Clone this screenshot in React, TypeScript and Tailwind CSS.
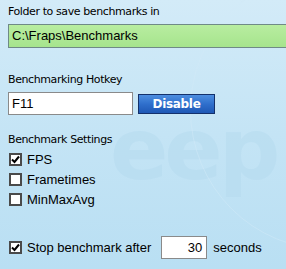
import React from 'react'

function Check({ checked }: { checked?: boolean }) {
  return (
    <span className="w-[13px] h-[13px] border-2 border-[#4a4a4a] bg-white flex items-center justify-center shrink-0">
      {checked && (
        <svg width="9" height="9" viewBox="0 0 9 9">
          <path d="M1 4.5 L3.5 7 L8 1.5" stroke="#000" strokeWidth="2" fill="none" />
        </svg>
      )}
    </span>
  )
}

export default function App() {
  const label = "text-[11px] text-black font-['DejaVu_Sans',sans-serif] tracking-[-0.4px]"
  const body = "text-[13px] text-black font-['Liberation_Sans',Arial,sans-serif]"

  return (
    <div className="relative w-[286px] h-[269px] overflow-hidden bg-gradient-to-b from-[#d3ebf8] via-[#c4e4f5] to-[#b9dff3]">
      {/* watermark */}
      <div className="absolute left-[110px] top-[106px] text-[86px] leading-none font-black text-[#b7dcf0] opacity-60 font-['DejaVu_Sans',sans-serif] select-none tracking-[-4px]">
        eep
      </div>
      <div className="absolute left-[190px] top-[-30px] w-[280px] h-[280px] rounded-full border border-[#d2eaf7] opacity-50" />

      <div className="relative flex flex-col pl-2">
        <div className={`${label} mt-[5px] h-[14px] leading-[14px]`}>Folder to save benchmarks in</div>
        <div className="mt-[5px] h-[24px] w-[290px] border border-[#6f8a86] bg-gradient-to-b from-[#b8eda0] to-[#a6e48d] flex items-center pl-[3px]">
          <span className={body}>C:\Fraps\Benchmarks</span>
        </div>

        <div className={`${label} mt-[25px] h-[14px] leading-[14px]`}>Benchmarking Hotkey</div>
        <div className="mt-[5px] flex items-center gap-[5px]">
          <div className="h-[23px] w-[125px] border border-[#8a8a8a] bg-white flex items-center pl-[3px]">
            <span className={body}>F11</span>
          </div>
          <div className="h-[20px] w-[77px] border border-[#14316b] bg-gradient-to-b from-[#4d8ee0] via-[#2f6fcc] to-[#1f58b5] flex items-center justify-center">
            <span className="text-[12px] font-bold text-white font-['DejaVu_Sans',sans-serif] tracking-[-0.3px]">Disable</span>
          </div>
        </div>

        <div className={`${label} mt-[18px] h-[14px] leading-[14px]`}>Benchmark Settings</div>
        <div className="mt-[5px] flex flex-col gap-[5px] pl-px">
          {[
            ['FPS', true],
            ['Frametimes', false],
            ['MinMaxAvg', false],
          ].map(([t, c]) => (
            <div key={t as string} className="flex items-center gap-[5px] h-[15px]">
              <Check checked={c as boolean} />
              <span className={body}>{t as string}</span>
            </div>
          ))}
        </div>

        <div className="mt-[29px] flex items-center pl-px">
          <Check checked />
          <span className={`${body} ml-[5px]`}>Stop benchmark after</span>
          <div className="ml-[10px] h-[23px] w-[46px] border border-[#8a8a8a] bg-white flex items-center justify-end pr-[4px]">
            <span className={body}>30</span>
          </div>
          <span className={`${body} ml-[6px]`}>seconds</span>
        </div>
      </div>
    </div>
  )
}
